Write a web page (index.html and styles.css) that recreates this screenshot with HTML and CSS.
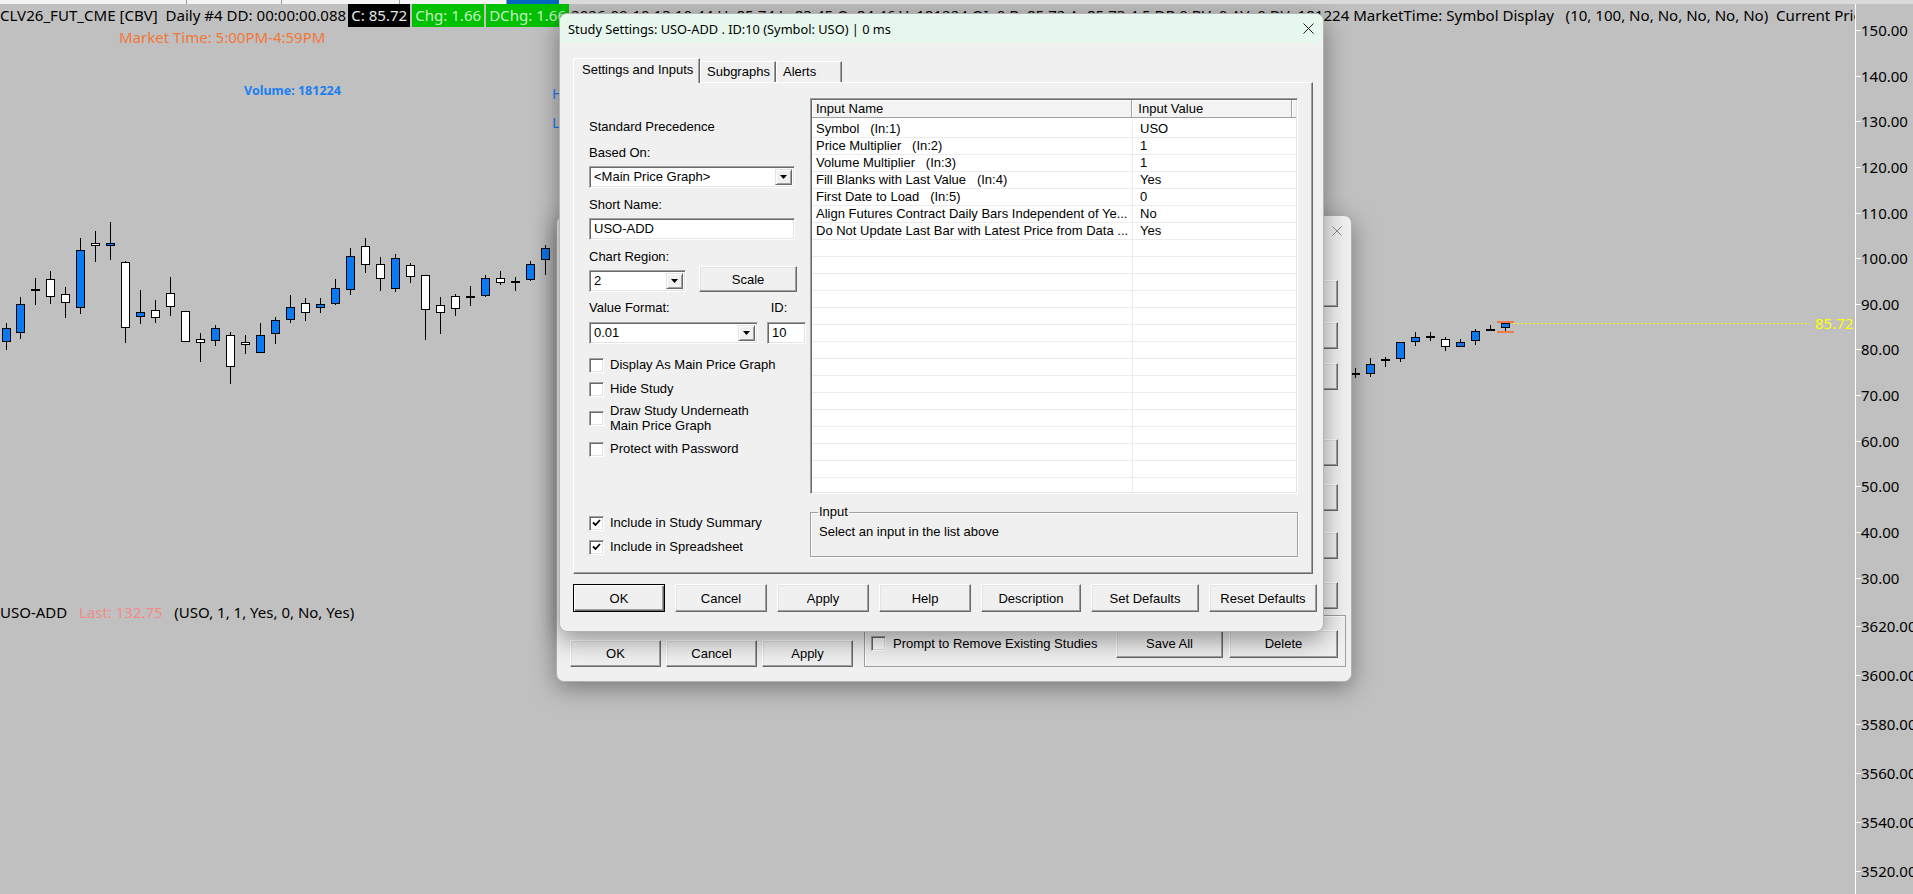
FILE: index.html
```html
<!DOCTYPE html>
<html>
<head>
<meta charset="utf-8">
<title>Study Settings</title>
<link rel="stylesheet" href="styles.css">
</head>
<body>
<div class="screen">
  <div class="topstrip">
    <span class="seg w187"></span><span class="seg w95"></span><span class="seg w118"></span><span class="seg w107"></span><span class="seg blue"></span><span class="seg rest"></span>
  </div>

  <svg class="plot" width="1913" height="894" viewBox="0 0 1913 894">
    <g class="wk">
      <path d="M6.5 323V350M20.5 297V339M35.5 278V305M50.5 271V304M65.5 287V318M80.5 238V314M95.5 231V262M110.5 222V260M125.5 261V343M140.5 290V324M155.5 300V323M170.5 277V316M200.5 333V362M215.5 325V346M230.5 332V384M245.5 335V354M260.5 323V353M275.5 317V344M290.5 295V323M305.5 298V321M320.5 298V313M335.5 279V305M350.5 248V295M365.5 238V273M380.5 257V291M395.5 254V292M410.5 263V283M425.5 275V340M440.5 297V334M455.5 294V316M470.5 286V306M485.5 275V297M500.5 271V285M515.5 277V291M530.5 261V281M545.5 245V275"/>
      <path d="M1355.5 368V378M1370.5 358V377M1385.5 357V367M1400.5 342V362M1415.5 332V346M1430.5 332V341M1445.5 337V351M1460.5 339V347M1475.5 329V345M1490.5 325V331M1505.5 321V331"/>
    </g>
    <g class="cross">
      <path d="M31 290H40M466 297H475M511 282H520M1351 374H1360M1381 360H1390M1426 337H1435M1486 330H1495"/>
    </g>
    <g class="up">
      <rect x="2.5" y="328.5" width="8" height="13"/>
      <rect x="16.5" y="304.5" width="8" height="28"/>
      <rect x="76.5" y="250.5" width="8" height="57"/>
      <rect x="106.5" y="243.5" width="8" height="2"/>
      <rect x="136.5" y="312.5" width="8" height="4"/>
      <rect x="211.5" y="328.5" width="8" height="12"/>
      <rect x="256.5" y="335.5" width="8" height="17"/>
      <rect x="271.5" y="320.5" width="8" height="13"/>
      <rect x="286.5" y="307.5" width="8" height="12"/>
      <rect x="316.5" y="304.5" width="8" height="3"/>
      <rect x="331.5" y="288.5" width="8" height="15"/>
      <rect x="346.5" y="256.5" width="8" height="33"/>
      <rect x="391.5" y="258.5" width="8" height="30"/>
      <rect x="481.5" y="278.5" width="8" height="17"/>
      <rect x="526.5" y="264.5" width="8" height="15"/>
      <rect x="541.5" y="248.5" width="8" height="11"/>
      <rect x="1366.5" y="364.5" width="8" height="9"/>
      <rect x="1396.5" y="342.5" width="8" height="16"/>
      <rect x="1411.5" y="337.5" width="8" height="4"/>
      <rect x="1456.5" y="342.5" width="8" height="4"/>
      <rect x="1471.5" y="331.5" width="8" height="9"/>
      <rect x="1501.5" y="323.5" width="8" height="4"/>
    </g>
    <g class="dn">
      <rect x="46.5" y="279.5" width="8" height="17"/>
      <rect x="61.5" y="294.5" width="8" height="8"/>
      <rect x="91.5" y="243.5" width="8" height="2"/>
      <rect x="121.5" y="262.5" width="8" height="65"/>
      <rect x="151.5" y="310.5" width="8" height="7"/>
      <rect x="166.5" y="293.5" width="8" height="13"/>
      <rect x="181.5" y="311.5" width="8" height="30"/>
      <rect x="196.5" y="339.5" width="8" height="3"/>
      <rect x="226.5" y="335.5" width="8" height="31"/>
      <rect x="241.5" y="342.5" width="8" height="2"/>
      <rect x="301.5" y="303.5" width="8" height="9"/>
      <rect x="361.5" y="246.5" width="8" height="18"/>
      <rect x="376.5" y="264.5" width="8" height="14"/>
      <rect x="406.5" y="265.5" width="8" height="11"/>
      <rect x="421.5" y="275.5" width="8" height="34"/>
      <rect x="436.5" y="305.5" width="8" height="7"/>
      <rect x="451.5" y="296.5" width="8" height="12"/>
      <rect x="496.5" y="278.5" width="8" height="4"/>
      <rect x="1441.5" y="339.5" width="8" height="7"/>
    </g>
    <path class="lastmark" d="M1497 322H1514M1497 332H1514"/>
    <path class="dots" d="M1513 323.5H1810"/>
    <path class="axisline" d="M1855.5 4V894"/>
    <path class="ticks" d="M1856 30.5H1861M1856 76.5H1861M1856 121.5H1861M1856 167.5H1861M1856 213.5H1861M1856 258.5H1861M1856 304.5H1861M1856 349.5H1861M1856 395.5H1861M1856 441.5H1861M1856 486.5H1861M1856 532.5H1861M1856 578.5H1861M1856 626.5H1861M1856 675.5H1861M1856 724.5H1861M1856 773.5H1861M1856 822.5H1861M1856 871.5H1861"/>
  </svg>

  <div class="hdr"><span class="htxt">CLV26_FUT_CME [CBV]  Daily #4 DD: 00:00:00.088</span><span class="cbox">C: 85.72</span><span class="gbox">Chg: 1.66</span><span class="gbox">DChg: 1.66</span><span class="htxt more">2026-09-10 13:10:44 H: 85.74 L: 83.45 O: 84.46 V: 181224 OI: 0 B: 85.72 A: 85.73 4:5 DB:0 BV: 0 AV: 0 DV: 181224 MarketTime: Symbol Display   (10, 100, No, No, No, No, No)  Current Price</span></div>
  <div class="mtime">Market Time: 5:00PM-4:59PM</div>
  <div class="vol">Volume: 181224</div>
  <div class="hl hh">H</div>
  <div class="hl ll">L</div>
  <div class="study">USO-ADD   <span class="last">Last: 132.75</span>   (USO, 1, 1, Yes, 0, No, Yes)</div>
  <div class="lastlbl">85.72</div>

  <div class="ax" style="top:21px">150.00</div>
  <div class="ax" style="top:67px">140.00</div>
  <div class="ax" style="top:112px">130.00</div>
  <div class="ax" style="top:158px">120.00</div>
  <div class="ax" style="top:204px">110.00</div>
  <div class="ax" style="top:249px">100.00</div>
  <div class="ax" style="top:295px">90.00</div>
  <div class="ax" style="top:340px">80.00</div>
  <div class="ax" style="top:386px">70.00</div>
  <div class="ax" style="top:432px">60.00</div>
  <div class="ax" style="top:477px">50.00</div>
  <div class="ax" style="top:523px">40.00</div>
  <div class="ax" style="top:569px">30.00</div>
  <div class="ax" style="top:617px">3620.00</div>
  <div class="ax" style="top:666px">3600.00</div>
  <div class="ax" style="top:715px">3580.00</div>
  <div class="ax" style="top:764px">3560.00</div>
  <div class="ax" style="top:813px">3540.00</div>
  <div class="ax" style="top:862px">3520.00</div>

  <!-- background window: Chart Studies -->
  <div class="dlg2">
    <div class="d2title"><svg class="xicon" width="10" height="10" viewBox="0 0 10 10"><path d="M0.5 0.5L9.5 9.5M9.5 0.5L0.5 9.5"/></svg></div>
    <div class="d2main">
      <div class="d2side">
        <div class="btn sb s1"></div>
        <div class="btn sb s2"></div>
        <div class="btn sb s3"></div>
        <div class="btn sb s4"></div>
        <div class="btn sb s5"></div>
        <div class="btn sb s6"></div>
        <div class="btn sb s7"></div>
      </div>
    </div>
    <div class="d2bottom">
      <div class="btn w91">OK</div>
      <div class="btn w91">Cancel</div>
      <div class="btn w91">Apply</div>
      <div class="d2grp">
        <div class="chk"><span class="box"></span><span>Prompt to Remove Existing Studies</span></div>
        <div class="btn w107 push">Save All</div>
        <div class="btn w109">Delete</div>
      </div>
    </div>
  </div>

  <!-- foreground window: Study Settings -->
  <div class="dlg1">
    <div class="tbar">
      <span>Study Settings: USO-ADD . ID:10 (Symbol: USO) | 0 ms</span>
      <svg class="xicon dark" width="11" height="11" viewBox="0 0 11 11"><path d="M0.5 0.5L10.5 10.5M10.5 0.5L0.5 10.5"/></svg>
    </div>
    <div class="dbody">
      <div class="tabs">
        <div class="tab sel">Settings and Inputs</div>
        <div class="tab t2">Subgraphs</div>
        <div class="tab t3">Alerts</div>
      </div>
      <div class="panel">
        <div class="lcol">
          <div class="lbl m21">Standard Precedence</div>
          <div class="lbl m10">Based On:</div>
          <div class="combo w206 m5"><span class="cv">&lt;Main Price Graph&gt;</span><span class="dd"><svg width="7" height="4" viewBox="0 0 7 4"><path d="M0 0H7L3.5 4Z"/></svg></span></div>
          <div class="lbl m9">Short Name:</div>
          <div class="field w206 m5">USO-ADD</div>
          <div class="lbl m9">Chart Region:</div>
          <div class="crow m1">
            <div class="combo w97"><span class="cv">2</span><span class="dd"><svg width="7" height="4" viewBox="0 0 7 4"><path d="M0 0H7L3.5 4Z"/></svg></span></div>
            <div class="btn scale">Scale</div>
          </div>
          <div class="vfrow m8"><span>Value Format:</span><span class="idlbl">ID:</span></div>
          <div class="frow m6">
            <div class="combo w169"><span class="cv">0.01</span><span class="dd"><svg width="7" height="4" viewBox="0 0 7 4"><path d="M0 0H7L3.5 4Z"/></svg></span></div>
            <div class="field w39">10</div>
          </div>
          <div class="chk m13"><span class="box"></span><span>Display As Main Price Graph</span></div>
          <div class="chk m8"><span class="box"></span><span>Hide Study</span></div>
          <div class="chk m6 two"><span class="box"></span><span>Draw Study Underneath<br>Main Price Graph</span></div>
          <div class="chk m8"><span class="box"></span><span>Protect with Password</span></div>
          <div class="chk m58"><span class="box"><svg width="9" height="8" viewBox="0 0 9 8"><path d="M1 3.5L3.5 6L8 1" /></svg></span><span>Include in Study Summary</span></div>
          <div class="chk m8"><span class="box"><svg width="9" height="8" viewBox="0 0 9 8"><path d="M1 3.5L3.5 6L8 1" /></svg></span><span>Include in Spreadsheet</span></div>
        </div>
        <div class="rcol">
          <div class="list">
            <div class="lhead"><div class="hc c1">Input Name</div><div class="hc c2">Input Value</div><div class="hc c3"></div></div>
            <div class="lbody">
              <div class="row"><div class="c1">Symbol   (In:1)</div><div class="c2">USO</div></div>
              <div class="row"><div class="c1">Price Multiplier   (In:2)</div><div class="c2">1</div></div>
              <div class="row"><div class="c1">Volume Multiplier   (In:3)</div><div class="c2">1</div></div>
              <div class="row"><div class="c1">Fill Blanks with Last Value   (In:4)</div><div class="c2">Yes</div></div>
              <div class="row"><div class="c1">First Date to Load   (In:5)</div><div class="c2">0</div></div>
              <div class="row"><div class="c1">Align Futures Contract Daily Bars Independent of Ye...</div><div class="c2">No</div></div>
              <div class="row"><div class="c1">Do Not Update Last Bar with Latest Price from Data ...</div><div class="c2">Yes</div></div>
              <div class="row"><div class="c1"></div><div class="c2"></div></div>
              <div class="row"><div class="c1"></div><div class="c2"></div></div>
              <div class="row"><div class="c1"></div><div class="c2"></div></div>
              <div class="row"><div class="c1"></div><div class="c2"></div></div>
              <div class="row"><div class="c1"></div><div class="c2"></div></div>
              <div class="row"><div class="c1"></div><div class="c2"></div></div>
              <div class="row"><div class="c1"></div><div class="c2"></div></div>
              <div class="row"><div class="c1"></div><div class="c2"></div></div>
              <div class="row"><div class="c1"></div><div class="c2"></div></div>
              <div class="row"><div class="c1"></div><div class="c2"></div></div>
              <div class="row"><div class="c1"></div><div class="c2"></div></div>
              <div class="row"><div class="c1"></div><div class="c2"></div></div>
              <div class="row"><div class="c1"></div><div class="c2"></div></div>
              <div class="row"><div class="c1"></div><div class="c2"></div></div>
              <div class="row"><div class="c1"></div><div class="c2"></div></div>
            </div>
          </div>
          <fieldset class="grp"><legend>Input</legend><div class="gtext">Select an input in the list above</div></fieldset>
        </div>
      </div>
      <div class="btnrow">
        <div class="btn def w92">OK</div>
        <div class="btn w92">Cancel</div>
        <div class="btn w92">Apply</div>
        <div class="btn w92">Help</div>
        <div class="btn w100">Description</div>
        <div class="btn w108">Set Defaults</div>
        <div class="btn w108">Reset Defaults</div>
      </div>
    </div>
  </div>
</div>
</body>
</html>
```

FILE: styles.css
```css
* { box-sizing: border-box; }
html, body { margin: 0; padding: 0; }
body { width: 1913px; height: 894px; overflow: hidden; background: #c0c0c0; }

.screen {
  position: relative;
  width: 1913px;
  height: 894px;
  overflow: hidden;
  background: #c0c0c0;
  font-family: "Noto Sans", "Open Sans", "DejaVu Sans", sans-serif;
  color: #000;
}

/* top strip */
.topstrip { position: relative; z-index: 2; display: flex; height: 4px; background: #f4f4f4; }
.seg { height: 4px; border-right: 1px solid #9a9a9a; }
.w187 { width: 187px; }
.w95 { width: 95px; }
.w118 { width: 118px; }
.seg.w107 { width: 107px; }
.seg.blue { width: 52px; background: #0067c0; border-right: none; }
.seg.rest { flex: 1; border-right: none; background: #dadada; }

/* chart */
.plot { position: absolute; left: 0; top: 0; }
.wk path { stroke: #000; stroke-width: 1; fill: none; }
.cross path { stroke: #000; stroke-width: 2; fill: none; }
.up rect { fill: #0a7af0; stroke: #000; stroke-width: 1; }
.dn rect { fill: #fff; stroke: #000; stroke-width: 1; }
.lastmark { stroke: #f07850; stroke-width: 2; fill: none; }
.dots { stroke: #ffff00; stroke-width: 1; stroke-dasharray: 2 2; fill: none; }
.axisline { stroke: #fff; stroke-width: 1; fill: none; }
.ticks { stroke: #fff; stroke-width: 1; fill: none; }

.hdr {
  position: absolute; left: 0; top: 4px; width: 1855px; height: 23px;
  display: flex; white-space: pre; overflow: hidden;
  font-size: 15.07px; line-height: 23px;
}
.cbox { background: #000; color: #e6e6e6; padding: 0 3px; margin-left: 2px; }
.gbox { background: #00c000; color: #c6f2c6; padding: 0 3px; margin-left: 2px; }
.more { margin-left: 2px; }

.mtime { position: absolute; left: 119px; top: 28px; font-size: 15px; line-height: 18px; color: #f07838; }
.vol { position: absolute; left: 244px; top: 83px; font-size: 12.5px; font-weight: bold; line-height: 16px; color: #1a7ff0; }
.hl { position: absolute; left: 552px; font-size: 15px; line-height: 18px; color: #1a7ff0; }
.hh { top: 84px; }
.ll { top: 113px; }
.study { position: absolute; left: 0; top: 603px; font-size: 15px; line-height: 18px; white-space: pre; }
.last { color: #f08c8c; }
.lastlbl { position: absolute; left: 1815px; top: 314px; font-size: 15px; line-height: 18px; color: #ffff00; }
.ax { position: absolute; left: 1861px; font-size: 15px; line-height: 18px; white-space: nowrap; }

/* generic win controls */
.btn {
  display: flex; align-items: center; justify-content: center;
  height: 28px; flex: none;
  background: #f0f0f0;
  border: 1px solid; border-color: #fff #696969 #696969 #fff;
  box-shadow: inset -1px -1px 0 #a0a0a0, inset 1px 1px 0 #e3e3e3;
  font-family: "Liberation Sans", Arial, sans-serif; font-size: 13px; color: #000;
}
.btn.def { border-color: #000; box-shadow: inset 1px 1px 0 #fff, inset -1px -1px 0 #696969, inset -2px -2px 0 #a0a0a0; }
.w91 { width: 91px; }
.w92 { width: 92px; }
.w100 { width: 100px; }
.w108 { width: 108px; }
.w109 { width: 109px; }
.btn.w107 { width: 107px; }

.xicon path { stroke: #8a8a8a; stroke-width: 1; fill: none; }
.xicon.dark path { stroke: #1a1a1a; }

/* background dialog */
.dlg2 {
  position: absolute; left: 556px; top: 215px; width: 796px; height: 467px;
  background: #f0f0f0; border: 1px solid #b0b0b0; border-radius: 8px;
  box-shadow: 0 6px 24px rgba(0,0,0,0.38);
  display: flex; flex-direction: column;
  padding: 0 13px 14px 13px;
  font-family: "Liberation Sans", Arial, sans-serif; font-size: 13px;
}
.d2title { height: 30px; flex: none; display: flex; justify-content: flex-end; align-items: center; margin-right: -13px; padding-right: 9px; }
.d2main { flex: 1; display: flex; justify-content: flex-end; }
.d2side { width: 110px; display: flex; flex-direction: column; }
.sb { height: 27px; width: 110px; }
.s1 { margin-top: 34px; }
.s2 { margin-top: 15px; }
.s3 { margin-top: 14px; }
.s4 { margin-top: 49px; }
.s5 { margin-top: 18px; }
.s6 { margin-top: 21px; }
.s7 { margin-top: 23px; }
.d2bottom { height: 52px; flex: none; display: flex; align-items: flex-end; gap: 5px; }
.d2bottom > .btn { height: 27px; }
.d2grp {
  flex: 1; height: 52px; margin-left: 6px; margin-right: -8px;
  border: 1px solid #a0a0a0; box-shadow: inset 1px 1px 0 #fff;
  display: flex; align-items: center; padding: 5px 7px 0 6px;
}
.d2grp .chk { gap: 7px; }
.push { margin-left: auto; margin-right: 6px; }

/* foreground dialog */
.dlg1 {
  position: absolute; left: 559px; top: 13px; width: 765px; height: 619px;
  background: #f0f0f0; border: 1px solid #b4b4b4; border-radius: 8px;
  box-shadow: 0 8px 26px rgba(0,0,0,0.4);
  overflow: hidden;
  display: flex; flex-direction: column;
  font-family: "Liberation Sans", Arial, sans-serif; font-size: 13px; color: #000;
}
.tbar {
  height: 29px; flex: none; background: #e7f7ee;
  display: flex; align-items: center; justify-content: space-between;
  padding: 0 9px 0 8px;
  font-family: "Noto Sans", "Open Sans", sans-serif; font-size: 12.8px;
}
.dbody { padding: 15px 0 0 13px; }

.tabs { display: flex; align-items: flex-end; height: 24px; position: relative; z-index: 1; }
.tab {
  height: 21px; line-height: 19px; padding-left: 6px; white-space: nowrap;
  background: #f0f0f0;
  border-left: 1px solid #fff; border-top: 1px solid #fff; border-right: 1px solid #696969;
  box-shadow: inset -1px 0 0 #a0a0a0;
}
.tab.sel { width: 127px; height: 25px; margin-bottom: -1px; line-height: 22px; padding-left: 8px; }
.tab.t2 { width: 76px; }
.tab.t3 { width: 66px; }

.panel {
  width: 740px; height: 492px;
  border: 1px solid; border-color: #fff #696969 #696969 #fff;
  box-shadow: inset -1px -1px 0 #a0a0a0;
  display: flex; padding: 15px 0 0 15px;
}
.lcol { width: 217px; display: flex; flex-direction: column; }
.rcol { width: 488px; margin-left: 4px; }

.lbl { line-height: 16px; }
.m1 { margin-top: 1px; }
.m5 { margin-top: 5px; }
.m6 { margin-top: 6px; }
.m8 { margin-top: 8px; }
.m9 { margin-top: 9px; }
.m10 { margin-top: 10px; }
.m13 { margin-top: 13px; }
.m21 { margin-top: 21px; }
.m58 { margin-top: 58px; }

.combo, .field {
  height: 22px; background: #fff;
  border: 1px solid; border-color: #a0a0a0 #fff #fff #a0a0a0;
  box-shadow: inset 1px 1px 0 #696969, inset -1px -1px 0 #e3e3e3;
}
.combo { display: flex; padding: 2px 2px 2px 2px; }
.cv { flex: 1; line-height: 16px; padding-left: 2px; white-space: pre; }
.dd {
  width: 17px; flex: none; background: #f0f0f0;
  border: 1px solid; border-color: #e3e3e3 #696969 #696969 #e3e3e3;
  box-shadow: inset 1px 1px 0 #fff, inset -1px -1px 0 #a0a0a0;
  display: flex; align-items: center; justify-content: center;
}
.dd path { fill: #000; }
.field { line-height: 20px; padding-left: 4px; }
.w206 { width: 206px; }
.w97 { width: 97px; }
.w169 { width: 169px; }
.w39 { width: 39px; }

.crow { display: flex; align-items: flex-end; height: 26px; }
.btn.scale { width: 98px; height: 26px; margin-left: 13px; }
.vfrow { display: flex; line-height: 16px; }
.idlbl { margin-left: 101px; }
.frow { display: flex; gap: 9px; }

.chk { display: flex; align-items: center; gap: 6px; line-height: 16px; white-space: nowrap; }
.chk.two { line-height: 15px; }
.box {
  width: 15px; height: 15px; flex: none; background: #fff;
  border: 1px solid; border-color: #a0a0a0 #fff #fff #a0a0a0;
  box-shadow: inset 1px 1px 0 #696969, inset -1px -1px 0 #e3e3e3;
  display: flex; align-items: center; justify-content: center;
}
.box path { stroke: #000; stroke-width: 1.8; fill: none; }

.list {
  height: 396px; background: #fff; overflow: hidden;
  border: 1px solid; border-color: #a0a0a0 #fff #fff #a0a0a0;
  box-shadow: inset 1px 1px 0 #696969, inset -1px -1px 0 #e3e3e3;
  padding: 1px;
}
.lhead { display: flex; height: 18px; }
.hc {
  height: 18px; line-height: 17px; padding-left: 4px; background: #f3f3f3;
  border-right: 1px solid #a0a0a0; border-bottom: 1px solid #a0a0a0;
  box-shadow: inset 1px 1px 0 #fff;
}
.lhead .c1 { width: 321px; }
.lhead .c2 { width: 160px; padding-left: 6px; }
.lhead .c3 { flex: 1; border-right: none; }
.lbody { padding-top: 3px; }
.row { display: flex; height: 17px; border-bottom: 1px solid #ececec; line-height: 16px; white-space: pre; }
.row .c1 { width: 321px; padding-left: 4px; border-right: 1px solid #ececec; overflow: hidden; }
.row .c2 { width: 160px; padding-left: 7px; }

.grp {
  margin: 11px 0 0 0; padding: 0 8px; height: 52px;
  border: 1px solid #a0a0a0; box-shadow: 1px 1px 0 #fff, inset 1px 1px 0 #fff;
}
.grp legend { padding: 0 1px; margin-left: -1px; line-height: 14px; }
.gtext { margin-top: 5px; line-height: 16px; }

.btnrow { display: flex; gap: 10px; margin-top: 10px; }
```
